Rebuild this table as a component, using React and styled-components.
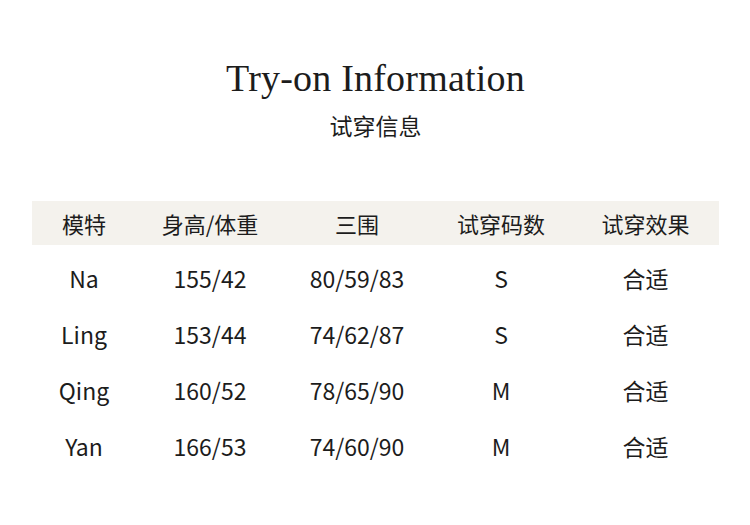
import React from "react";
import styled, { createGlobalStyle } from "styled-components";

const Global = createGlobalStyle`
  html, body { margin: 0; padding: 0; background: #ffffff; }
  body { width: 750px; height: 525px; overflow: hidden; }
`;

const Page = styled.div`
  width: 750px;
  height: 525px;
  box-sizing: border-box;
  padding: 55px 31px 0 32px;
  display: flex;
  flex-direction: column;
  align-items: stretch;
  color: #1c1c1c;
  font-family: "Noto Sans CJK SC", "Noto Sans", sans-serif;
`;

const Title = styled.h1`
  margin: 0;
  text-align: center;
  font-family: "Liberation Serif", "DejaVu Serif", serif;
  font-weight: 400;
  font-size: 38px;
  line-height: 46px;
  letter-spacing: 0.2px;
`;

const Subtitle = styled.h2`
  margin: 8px 0 0;
  text-align: center;
  font-weight: 400;
  font-size: 23px;
  line-height: 32px;
`;

const Table = styled.div`
  margin-top: 60px;
  display: flex;
  flex-direction: column;
`;

const Row = styled.div`
  display: grid;
  grid-template-columns: 104px 148px 146px 142px 147px;
  align-items: center;
  height: ${(p) => (p.$head ? "44px" : "56px")};
  background: ${(p) => (p.$head ? "#f4f2ed" : "transparent")};
  margin-bottom: ${(p) => (p.$head ? "5px" : "0")};
`;

const Cell = styled.div`
  text-align: center;
  font-size: ${(p) => (p.$head ? "22px" : "23px")};
  line-height: 1;
`;

const headers = ["模特", "身高/体重", "三围", "试穿码数", "试穿效果"];
const rows = [
  ["Na", "155/42", "80/59/83", "S", "合适"],
  ["Ling", "153/44", "74/62/87", "S", "合适"],
  ["Qing", "160/52", "78/65/90", "M", "合适"],
  ["Yan", "166/53", "74/60/90", "M", "合适"],
];

export default function App() {
  return (
    <>
      <Global />
      <Page>
        <Title>Try-on Information</Title>
        <Subtitle>试穿信息</Subtitle>
        <Table>
          <Row $head>
            {headers.map((h) => (
              <Cell $head key={h}>{h}</Cell>
            ))}
          </Row>
          {rows.map((r) => (
            <Row key={r[0]}>
              {r.map((c, i) => (
                <Cell key={i}>{c}</Cell>
              ))}
            </Row>
          ))}
        </Table>
      </Page>
    </>
  );
}
